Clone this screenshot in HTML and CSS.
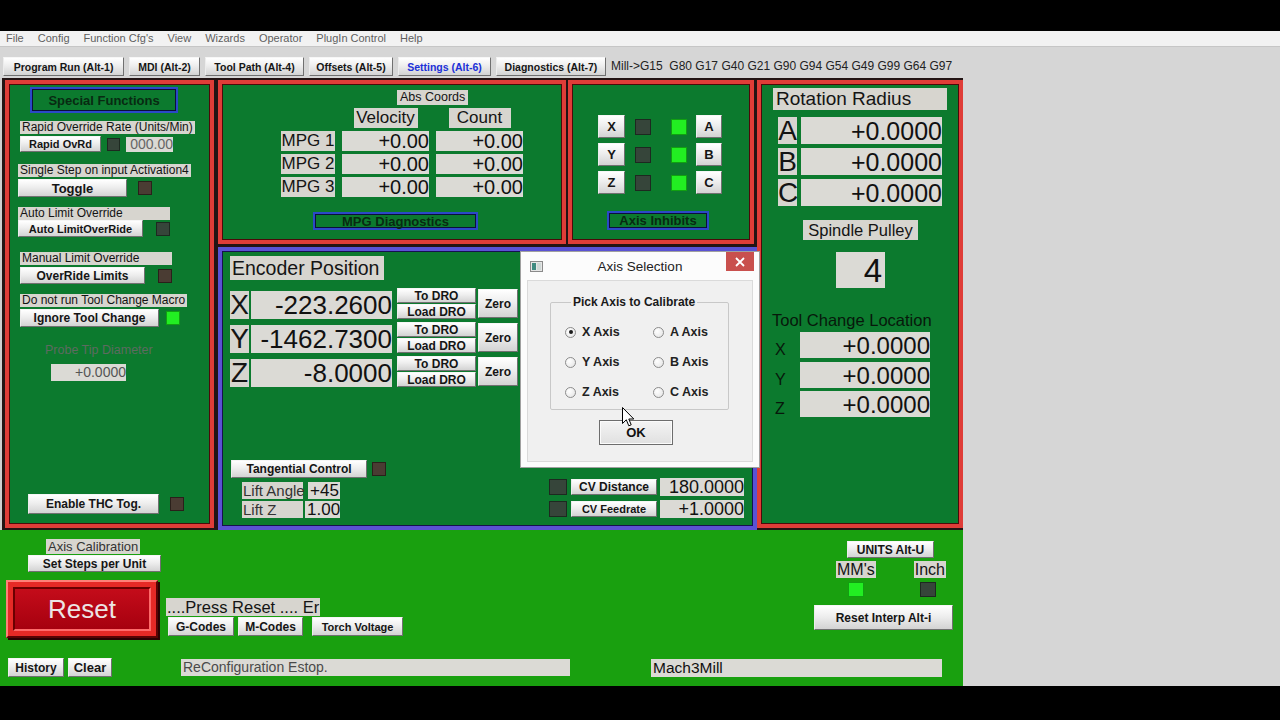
FILE: index.html
```html
<!DOCTYPE html>
<html lang="en">
<head>
    <meta charset="UTF-8">
    <title>Mach3 CNC Controller</title>
    <link rel="stylesheet" href="styles.css">
</head>
<body>

<div class="topbar"></div>

<div class="menu">
    <span>File</span><span>Config</span><span>Function Cfg's</span><span>View</span>
    <span>Wizards</span><span>Operator</span><span>PlugIn Control</span><span>Help</span>
</div>

<div class="tabs">
    <div class="btn tab tab-run">Program Run (Alt-1)</div>
    <div class="btn tab tab-mdi">MDI (Alt-2)</div>
    <div class="btn tab tab-path">Tool Path (Alt-4)</div>
    <div class="btn tab tab-offsets">Offsets (Alt-5)</div>
    <div class="btn tab tab-settings active">Settings (Alt-6)</div>
    <div class="btn tab tab-diag">Diagnostics (Alt-7)</div>
    <div class="modal-line">Mill-&gt;G15&nbsp; G80 G17 G40 G21 G90 G94 G54 G49 G99 G64 G97</div>
</div>

<div class="screen">
    <div class="main">
        <div class="panels">

            <!-- special functions -->
            <div class="panel special">
                <div class="frame-btn sf-title">Special Functions</div>

                <div class="grp grp-rapid">
                    <div class="lbl small">Rapid Override Rate (Units/Min)</div>
                    <div class="ctl">
                        <div class="btn b11 rapid-btn">Rapid OvRd</div>
                        <div class="led rapid-led"></div>
                        <div class="fld rapid-fld">000.00</div>
                    </div>
                </div>
                <div class="grp grp-step">
                    <div class="lbl small">Single Step on input Activation4</div>
                    <div class="ctl">
                        <div class="btn b13 toggle-btn">Toggle</div>
                        <div class="led brown toggle-led"></div>
                    </div>
                </div>
                <div class="grp grp-auto">
                    <div class="lbl small">Auto Limit Override</div>
                    <div class="ctl">
                        <div class="btn b11 auto-btn">Auto LimitOverRide</div>
                        <div class="led auto-led"></div>
                    </div>
                </div>
                <div class="grp grp-manual">
                    <div class="lbl small">Manual Limit Override</div>
                    <div class="ctl">
                        <div class="btn b12 override-btn">OverRide Limits</div>
                        <div class="led brown override-led"></div>
                    </div>
                </div>
                <div class="grp grp-tool">
                    <div class="lbl small">Do not run Tool Change Macro</div>
                    <div class="ctl">
                        <div class="btn b12 ignore-btn">Ignore Tool Change</div>
                        <div class="led on ignore-led"></div>
                    </div>
                </div>

                <div class="probe-lbl">Probe Tip Diameter</div>
                <div class="fld probe-fld">+0.0000</div>

                <div class="ctl thc-row">
                    <div class="btn b12 thc-btn">Enable THC Tog.</div>
                    <div class="led brown thc-led"></div>
                </div>
            </div>

            <div class="middle">
                <div class="middle-top">

                    <!-- MPG -->
                    <div class="panel mpg">
                        <div class="lbl abs-lbl">Abs Coords</div>
                        <div class="mpg-grid">
                            <div></div>
                            <div class="lbl mpg-head head-vel">Velocity</div>
                            <div class="lbl mpg-head head-count">Count</div>

                            <div class="lbl mpg-name">MPG 1</div>
                            <div class="fld mpg-val">+0.00</div>
                            <div class="fld mpg-val">+0.00</div>

                            <div class="lbl mpg-name">MPG 2</div>
                            <div class="fld mpg-val">+0.00</div>
                            <div class="fld mpg-val">+0.00</div>

                            <div class="lbl mpg-name">MPG 3</div>
                            <div class="fld mpg-val">+0.00</div>
                            <div class="fld mpg-val">+0.00</div>
                        </div>
                        <div class="frame-btn mpg-diag">MPG Diagnostics</div>
                    </div>

                    <!-- axis inhibits -->
                    <div class="panel inhibits">
                        <div class="inh-rows">
                            <div class="inh-row">
                                <div class="btn ax-btn">X</div>
                                <div class="led inh-off"></div>
                                <div class="led on inh-on"></div>
                                <div class="btn ax-btn ax-right">A</div>
                            </div>
                            <div class="inh-row">
                                <div class="btn ax-btn">Y</div>
                                <div class="led inh-off"></div>
                                <div class="led on inh-on"></div>
                                <div class="btn ax-btn ax-right">B</div>
                            </div>
                            <div class="inh-row">
                                <div class="btn ax-btn">Z</div>
                                <div class="led inh-off"></div>
                                <div class="led on inh-on"></div>
                                <div class="btn ax-btn ax-right">C</div>
                            </div>
                        </div>
                        <div class="frame-btn inh-btn">Axis Inhibits</div>
                    </div>
                </div>

                <!-- encoder -->
                <div class="panel encoder">
                    <div class="lbl enc-title">Encoder Position</div>

                    <div class="dro-row">
                        <div class="lbl dro-axis">X</div>
                        <div class="fld dro-val">-223.2600</div>
                        <div class="dro-btns">
                            <div class="btn b12 dro-small">To DRO</div>
                            <div class="btn b12 dro-small">Load DRO</div>
                        </div>
                        <div class="btn b12 zero-btn">Zero</div>
                    </div>
                    <div class="dro-row">
                        <div class="lbl dro-axis">Y</div>
                        <div class="fld dro-val">-1462.7300</div>
                        <div class="dro-btns">
                            <div class="btn b12 dro-small">To DRO</div>
                            <div class="btn b12 dro-small">Load DRO</div>
                        </div>
                        <div class="btn b12 zero-btn">Zero</div>
                    </div>
                    <div class="dro-row">
                        <div class="lbl dro-axis">Z</div>
                        <div class="fld dro-val">-8.0000</div>
                        <div class="dro-btns">
                            <div class="btn b12 dro-small">To DRO</div>
                            <div class="btn b12 dro-small">Load DRO</div>
                        </div>
                        <div class="btn b12 zero-btn">Zero</div>
                    </div>

                    <div class="enc-bottom">
                        <div class="tang">
                            <div class="ctl">
                                <div class="btn b12 tang-btn">Tangential Control</div>
                                <div class="led brown tang-led"></div>
                            </div>
                            <div class="lift-row lift-angle">
                                <div class="lbl lift-lbl">Lift Angle</div>
                                <div class="fld lift-fld">+45</div>
                            </div>
                            <div class="lift-row lift-z">
                                <div class="lbl lift-lbl">Lift Z</div>
                                <div class="fld lift-fld">1.00</div>
                            </div>
                        </div>
                        <div class="cv">
                            <div class="cv-row">
                                <div class="led cv-led"></div>
                                <div class="btn b12 cv-btn">CV Distance</div>
                                <div class="fld cv-fld">180.0000</div>
                            </div>
                            <div class="cv-row">
                                <div class="led cv-led"></div>
                                <div class="btn b11 cv-btn">CV Feedrate</div>
                                <div class="fld cv-fld">+1.0000</div>
                            </div>
                        </div>
                    </div>
                </div>
            </div>

            <!-- rotation radius / tool change -->
            <div class="panel rotation">
                <div class="lbl rot-title">Rotation Radius</div>
                <div class="rot-grid">
                    <div class="lbl rot-axis">A</div><div class="fld rot-val">+0.0000</div>
                    <div class="lbl rot-axis">B</div><div class="fld rot-val">+0.0000</div>
                    <div class="lbl rot-axis">C</div><div class="fld rot-val">+0.0000</div>
                </div>
                <div class="lbl spindle-lbl">Spindle Pulley</div>
                <div class="fld pulley">4</div>
                <div class="tcl-title">Tool Change Location</div>
                <div class="tcl-grid">
                    <div class="tcl-axis">X</div><div class="fld tcl-val">+0.0000</div>
                    <div class="tcl-axis">Y</div><div class="fld tcl-val">+0.0000</div>
                    <div class="tcl-axis">Z</div><div class="fld tcl-val">+0.0000</div>
                </div>
            </div>
        </div>

        <div class="bottom">
            <div class="bcol bcol-left">
                <div class="lbl axis-cal">Axis Calibration</div>
                <div class="btn b12 steps-btn">Set Steps per Unit</div>
                <div class="reset">
                    <div class="reset-face">Reset</div>
                </div>
                <div class="hist-row">
                    <div class="btn b12 hist-btn">History</div>
                    <div class="btn b12 clear-btn">Clear</div>
                </div>
            </div>
            <div class="bcol bcol-mid">
                <div class="lbl press-lbl">....Press Reset .... Er</div>
                <div class="codes-row">
                    <div class="btn b12 gcode-btn">G-Codes</div>
                    <div class="btn b12 mcode-btn">M-Codes</div>
                    <div class="btn b11 torch-btn">Torch Voltage</div>
                </div>
                <div class="fld status">ReConfiguration Estop.</div>
            </div>
            <div class="bcol bcol-right">
                <div class="btn b12 units-btn">UNITS Alt-U</div>
                <div class="units-row">
                    <div class="lbl unit-lbl">MM's</div>
                    <div class="lbl unit-lbl">Inch</div>
                </div>
                <div class="units-leds">
                    <div class="led on mm-led"></div>
                    <div class="led inch-led"></div>
                </div>
                <div class="btn b12 interp-btn">Reset Interp Alt-i</div>
                <div class="fld profile">Mach3Mill</div>
            </div>
        </div>
    </div>
    <div class="side"></div>
</div>

<div class="bottombar"></div>

<!-- modal dialog on top of the screen -->
<div class="dialog">
    <div class="dlg-titlebar">
        <svg class="dlg-icon" width="13" height="11" viewBox="0 0 13 11">
            <rect x="0.5" y="0.5" width="12" height="10" fill="#e6e6e6" stroke="#8a8a8a"/>
            <rect x="2" y="2" width="4" height="7" fill="#3f8a80"/>
            <rect x="7" y="2" width="4" height="7" fill="#cfd8d6"/>
        </svg>
        <div class="dlg-title">Axis Selection</div>
        <div class="dlg-close">
            <svg width="10" height="10" viewBox="0 0 10 10">
                <path d="M1 1 L9 9 M9 1 L1 9" stroke="#fff" stroke-width="1.8"/>
            </svg>
        </div>
    </div>
    <div class="dlg-body">
        <fieldset class="dlg-group">
            <legend>Pick Axis to Calibrate</legend>
            <div class="radio-grid">
                <div class="opt"><span class="radio checked"></span>X Axis</div>
                <div class="opt"><span class="radio"></span>A Axis</div>
                <div class="opt"><span class="radio"></span>Y Axis</div>
                <div class="opt"><span class="radio"></span>B Axis</div>
                <div class="opt"><span class="radio"></span>Z Axis</div>
                <div class="opt"><span class="radio"></span>C Axis</div>
            </div>
        </fieldset>
        <div class="dlg-ok">OK</div>
    </div>
</div>

<svg class="cursor" width="13" height="21" viewBox="0 0 13 21">
    <path d="M0.5 0.5 L0.5 16.5 L4.3 12.8 L6.8 18.8 L9.2 17.8 L6.8 12 L11.8 12 Z" fill="#fff" stroke="#000" stroke-width="1"/>
</svg>

</body>
</html>
```

FILE: styles.css
```css
* {
    box-sizing: border-box;
}

body {
    margin: 0;
    width: 1280px;
    height: 720px;
    overflow: hidden;
    position: relative;
    background: #000;
    font-family: "Liberation Sans", Arial, sans-serif;
    color: #111;
}

.topbar {
    height: 31px;
    background: #000;
}

.bottombar {
    height: 34px;
    background: #000;
}

/* menu + tabs */
.menu {
    height: 16px;
    display: flex;
    gap: 14px;
    padding-left: 6px;
    background: #f2f2f2;
    border-bottom: 1px solid #c6c6c6;
    font-size: 11px;
    line-height: 15px;
    color: #5e5e5e;
}

.tabs {
    height: 31px;
    display: flex;
    align-items: flex-start;
    gap: 5px;
    padding: 10px 0 0 3px;
    background: #d6d6d6;
}

.tab {
    height: 19px;
    font-size: 10.5px;
}

.tab.active { color: #1b30d8; }
.tab-run { width: 121px; }
.tab-mdi { width: 71px; }
.tab-path { width: 99px; }
.tab-offsets { width: 84px; }
.tab-settings { width: 93px; }
.tab-diag { width: 110px; }

.modal-line {
    font-size: 12px;
    line-height: 19px;
    color: #222;
    white-space: nowrap;
}

/* common widgets */
.btn {
    display: flex;
    align-items: center;
    justify-content: center;
    white-space: nowrap;
    font-weight: bold;
    color: #151515;
    background: linear-gradient(#ffffff, #eeeeee 45%, #d3d3d3);
    border: 1px solid;
    border-color: #f6f6f6 #707070 #707070 #ececec;
}

.b11 { font-size: 11px; }
.b12 { font-size: 12px; }
.b13 { font-size: 13px; }

.lbl {
    background: #d7d5cf;
    color: #141414;
    white-space: nowrap;
}

.fld {
    background: #dbdad5;
    color: #111;
    text-align: right;
    white-space: nowrap;
    overflow: hidden;
}

.led {
    width: 14px;
    height: 14px;
    background: #36453a;
    border: 1px solid #1d2920;
}

.led.brown { background: #4a3c33; border-color: #2a201a; }
.led.on { background: #22ee22; border-color: #11a011; }

.frame-btn {
    display: flex;
    align-items: center;
    justify-content: center;
    font-size: 13px;
    font-weight: bold;
    color: #082a12;
    border: 2px solid #2b49c6;
    box-shadow: inset 0 0 0 1px #0b0f3a;
}

.ctl {
    display: flex;
    align-items: center;
}

/* screen */
.screen {
    height: 608px;
    display: flex;
}

.main {
    width: 963px;
    display: flex;
    flex-direction: column;
    background: #19a00f;
}

.side {
    flex: 1;
    background: #d6d6d6;
}

.panels {
    height: 452px;
    display: flex;
    padding: 2px 0 0 5px;
    background: linear-gradient(to right, #cfcfcf 0, #cfcfcf 2px, #231414 2px);
}

.panel {
    display: flex;
    flex-direction: column;
    align-items: flex-start;
    background: #0c7a2e;
    border: 4px solid #df3d38;
    box-shadow: inset 0 0 0 1px #4d0909;
}

/* special functions */
.special {
    width: 209px;
    height: 448px;
    padding: 0 0 10px 11px;
}

.sf-title {
    width: 148px;
    height: 26px;
    margin: 3px 0 0 10px;
}

.lbl.small {
    height: 13px;
    padding: 0 2px;
    font-size: 12px;
    line-height: 13px;
}

.grp .ctl { margin-top: 2px; }
.grp-rapid { margin-top: 8px; }
.grp-step { margin: 12px 0 0 -2px; }
.grp-auto { margin: 10px 0 0 -2px; }
.grp-auto .ctl { margin-top: 0; }
.grp-manual { margin-top: 15px; }
.grp-tool { margin-top: 10px; }

.rapid-btn { width: 81px; height: 16px; }
.rapid-led { width: 13px; height: 13px; margin-left: 6px; }
.rapid-fld {
    width: 47px;
    height: 15px;
    margin-left: 6px;
    font-size: 14px;
    line-height: 15px;
    color: #666;
}

.toggle-btn { width: 109px; height: 18px; }
.toggle-led { margin-left: 11px; }
.auto-btn { width: 125px; height: 17px; }
.auto-led { margin-left: 13px; }
.override-btn { width: 125px; height: 17px; }
.override-led { margin-left: 13px; }
.ignore-btn { width: 139px; height: 18px; }
.ignore-led { margin-left: 7px; }

.probe-lbl {
    margin: 16px 0 0 25px;
    font-size: 12.5px;
    line-height: 14px;
    color: #5d6b60;
}

.probe-fld {
    width: 75px;
    height: 17px;
    margin: 7px 0 0 31px;
    font-size: 14px;
    line-height: 17px;
    color: #555;
}

.thc-row { margin: auto 0 0 8px; }
.thc-btn { width: 131px; height: 20px; }
.thc-led { margin-left: 11px; }

/* middle column */
.middle {
    width: 539px;
    margin-left: 4px;
    display: flex;
    flex-direction: column;
}

.middle-top {
    height: 164px;
    display: flex;
    gap: 2px;
}

.mpg { width: 348px; height: 164px; }
.inhibits { width: 186px; height: 164px; }

.abs-lbl {
    height: 15px;
    margin: 6px 0 0 175px;
    padding: 0 3px;
    font-size: 12.5px;
    line-height: 15px;
}

.mpg-grid {
    display: grid;
    grid-template-columns: 54px 87px 87px;
    grid-template-rows: repeat(4, 20px);
    column-gap: 7px;
    row-gap: 3px;
    margin: 3px 0 0 59px;
}

.mpg-head {
    justify-self: center;
    font-size: 17px;
    line-height: 20px;
    text-align: center;
}

.head-vel { width: 64px; }
.head-count { width: 62px; }

.mpg-name {
    font-size: 17px;
    line-height: 20px;
    text-align: center;
}

.mpg-val {
    font-size: 20px;
    line-height: 20px;
}

.mpg-diag {
    width: 165px;
    height: 18px;
    margin: 15px 0 0 91px;
}

.inh-rows {
    display: flex;
    flex-direction: column;
    gap: 5px;
    margin: 31px 0 0 26px;
}

.inh-row {
    display: flex;
    align-items: center;
    height: 23px;
}

.ax-btn {
    width: 27px;
    height: 23px;
    font-size: 13px;
}

.ax-right { width: 26px; margin-left: 9px; }
.inh-off { width: 16px; height: 16px; margin-left: 10px; }
.inh-on { width: 16px; height: 16px; margin-left: 20px; }

.inh-btn {
    width: 102px;
    height: 19px;
    margin: 17px 0 0 35px;
}

/* encoder */
.encoder {
    height: 283px;
    margin-top: 3px;
    border-color: #5a52d4;
    box-shadow: inset 0 0 0 1px #161050;
}

.enc-title {
    width: 154px;
    height: 24px;
    margin: 5px 0 0 8px;
    padding-left: 2px;
    font-size: 19.5px;
    line-height: 24px;
}

.dro-row {
    display: flex;
    align-items: center;
    height: 31px;
    margin: 3px 0 0 8px;
}

.encoder .dro-row:nth-child(2) { margin-top: 8px; }

.dro-axis {
    width: 19px;
    height: 28px;
    align-self: flex-end;
    font-size: 28px;
    line-height: 28px;
    text-align: center;
}

.dro-val {
    width: 141px;
    height: 28px;
    align-self: flex-end;
    margin-left: 2px;
    font-size: 26px;
    line-height: 28px;
}

.dro-btns {
    display: flex;
    flex-direction: column;
    gap: 1px;
    margin-left: 5px;
}

.dro-small { width: 79px; height: 15px; }
.zero-btn { width: 40px; height: 29px; margin-left: 2px; }

.enc-bottom {
    width: 100%;
    margin-top: auto;
    display: flex;
    justify-content: space-between;
    align-items: flex-end;
    padding: 0 9px 8px 9px;
}

.tang-btn { width: 136px; height: 18px; }
.tang-led { margin-left: 5px; }

.lift-row {
    display: flex;
    margin-left: 11px;
}

.lift-angle { margin-top: 4px; }
.lift-z { margin-top: 2px; }

.lift-lbl {
    width: 61px;
    height: 17px;
    padding-left: 1px;
    font-size: 15px;
    line-height: 17px;
    color: #333;
}

.lift-fld {
    height: 17px;
    font-size: 17px;
    line-height: 17px;
    text-align: left;
    padding-left: 2px;
}

.lift-angle .lift-fld { width: 32px; margin-left: 5px; }
.lift-z .lift-fld { width: 35px; margin-left: 2px; }

.cv-row {
    display: flex;
    align-items: center;
}

.cv-row + .cv-row { margin-top: 4px; }
.cv-led { width: 18px; height: 16px; }
.cv-btn { width: 86px; height: 16px; margin-left: 4px; }

.cv-fld {
    width: 84px;
    height: 18px;
    margin-left: 3px;
    font-size: 18px;
    line-height: 18px;
}

/* rotation panel */
.rotation {
    width: 206px;
    height: 448px;
}

.rot-title {
    width: 174px;
    height: 22px;
    margin: 4px 0 0 12px;
    padding-left: 3px;
    font-size: 19px;
    line-height: 22px;
}

.rot-grid {
    display: grid;
    grid-template-columns: 19px 141px;
    grid-auto-rows: 27px;
    column-gap: 4px;
    row-gap: 4px;
    margin: 7px 0 0 17px;
}

.rot-axis {
    font-size: 28px;
    line-height: 28px;
    text-align: center;
}

.rot-val {
    font-size: 25px;
    line-height: 28px;
}

.spindle-lbl {
    width: 115px;
    height: 20px;
    margin: 14px 0 0 42px;
    font-size: 16.5px;
    line-height: 20px;
    text-align: center;
}

.pulley {
    width: 49px;
    height: 36px;
    margin: 12px 0 0 75px;
    padding-right: 3px;
    font-size: 33px;
    line-height: 37px;
}

.tcl-title {
    margin: 24px 0 0 11px;
    font-size: 16.5px;
    line-height: 16px;
    color: #07180b;
}

.tcl-grid {
    display: grid;
    grid-template-columns: 25px 130px;
    grid-auto-rows: 26px;
    row-gap: 3.5px;
    margin: 4px 0 0 14px;
}

.tcl-axis {
    align-self: end;
    font-size: 16px;
    line-height: 16px;
    color: #07180b;
}

.tcl-val {
    font-size: 24px;
    line-height: 27px;
}

/* bottom area */
.bottom {
    height: 156px;
    display: flex;
}

.bcol {
    display: flex;
    flex-direction: column;
    align-items: flex-start;
}

.bcol-left { width: 166px; }
.bcol-mid { width: 474px; }
.bcol-right { flex: 1; align-items: flex-end; }

.axis-cal {
    height: 15px;
    margin: 9px 0 0 46px;
    padding: 0 2px;
    font-size: 13px;
    line-height: 15px;
    color: #333;
}

.steps-btn { width: 133px; height: 17px; margin: 1px 0 0 28px; }

.reset {
    width: 152px;
    height: 58px;
    margin: 8px 0 0 6px;
    padding: 5px;
    background: #e62a26;
    border: 2px solid;
    border-color: #ff8078 #5a0404 #5a0404 #ff8078;
    box-shadow: 2px 2px 0 #2a0202;
}

.reset-face {
    height: 100%;
    display: flex;
    align-items: center;
    justify-content: center;
    background: linear-gradient(#c40c1a, #a6000f);
    border: 2px solid;
    border-color: #6a0000 #ff6a6a #ff6a6a #6a0000;
    font-size: 26px;
    color: #ece4e4;
}

.hist-row {
    display: flex;
    gap: 4px;
    margin: 20px 0 0 8px;
}

.hist-btn { width: 56px; height: 19px; }
.clear-btn { width: 44px; height: 19px; font-size: 13px; }

.press-lbl {
    min-width: 154px;
    height: 18px;
    margin-top: 68px;
    padding-left: 1px;
    font-size: 16.5px;
    line-height: 18px;
}

.codes-row {
    display: flex;
    margin: 1px 0 0 2px;
}

.gcode-btn { width: 66px; height: 19px; }
.mcode-btn { width: 65px; height: 19px; margin-left: 4px; }
.torch-btn { width: 91px; height: 19px; margin-left: 9px; }

.status {
    width: 389px;
    height: 17px;
    margin: 23px 0 0 15px;
    padding-left: 2px;
    text-align: left;
    font-size: 14px;
    line-height: 17px;
    color: #4a4a4a;
}

.units-btn { width: 87px; height: 17px; margin: 11px 29px 0 0; }

.units-row {
    width: 110px;
    display: flex;
    justify-content: space-between;
    margin: 3px 17px 0 0;
}

.unit-lbl {
    height: 17px;
    padding: 0 1px;
    font-size: 16px;
    line-height: 17px;
}

.units-leds {
    width: 110px;
    display: flex;
    margin: 4px 17px 0 0;
}

.mm-led { width: 16px; height: 15px; margin-left: 12px; }
.inch-led { width: 16px; height: 15px; margin-left: 56px; }

.interp-btn { width: 139px; height: 25px; margin: 8px 10px 0 0; }

.profile {
    width: 291px;
    height: 18px;
    margin: 29px 21px 0 0;
    padding-left: 2px;
    text-align: left;
    font-size: 15.5px;
    line-height: 18px;
}

/* dialog */
.dialog {
    position: absolute;
    left: 520px;
    top: 251px;
    width: 240px;
    height: 217px;
    display: flex;
    flex-direction: column;
    padding: 0 6px 5px 6px;
    background: #fcfcfc;
    border: 1px solid #a0a0a0;
}

.dlg-titlebar {
    height: 28px;
    display: grid;
    grid-template-columns: 1fr auto 1fr;
    align-items: center;
}

.dlg-icon { margin-left: 3px; }

.dlg-title {
    font-size: 13.5px;
    color: #222;
}

.dlg-close {
    justify-self: end;
    align-self: start;
    width: 28px;
    height: 19px;
    margin-right: -1px;
    display: flex;
    align-items: center;
    justify-content: center;
    background: #c9504d;
}

.dlg-body {
    flex: 1;
    display: flex;
    flex-direction: column;
    align-items: flex-start;
    background: #f0f0f0;
    border: 1px solid #dadada;
}

.dlg-group {
    width: 179px;
    margin: 14px 0 0 22px;
    padding: 8px 0 2px 14px;
    border: 1px solid #c8c8c8;
    border-radius: 2px;
}

.dlg-group legend {
    margin-left: 6px;
    padding: 0 2px;
    font-size: 12px;
    font-weight: bold;
    line-height: 14px;
    color: #1a1a1a;
}

.radio-grid {
    display: grid;
    grid-template-columns: 88px auto;
    grid-auto-rows: 30px;
}

.opt {
    display: flex;
    align-items: center;
    font-size: 12.5px;
    font-weight: bold;
    color: #222;
}

.radio {
    position: relative;
    width: 11px;
    height: 11px;
    margin-right: 6px;
    border-radius: 50%;
    border: 1px solid #8c8c8c;
    background: radial-gradient(circle at 35% 35%, #ffffff, #e2e2e2);
}

.radio.checked::after {
    content: "";
    position: absolute;
    left: 2.5px;
    top: 2.5px;
    width: 4px;
    height: 4px;
    border-radius: 50%;
    background: #1a1a1a;
}

.dlg-ok {
    width: 74px;
    height: 25px;
    margin: 10px 0 0 71px;
    display: flex;
    align-items: center;
    justify-content: center;
    font-size: 13px;
    font-weight: bold;
    color: #111;
    background: linear-gradient(#f4f4f4, #e0e0e0);
    border: 1px solid #6d6d6d;
    box-shadow: inset 0 0 0 1px #fbfbfb;
}

.cursor {
    position: absolute;
    left: 622px;
    top: 407px;
}
```
